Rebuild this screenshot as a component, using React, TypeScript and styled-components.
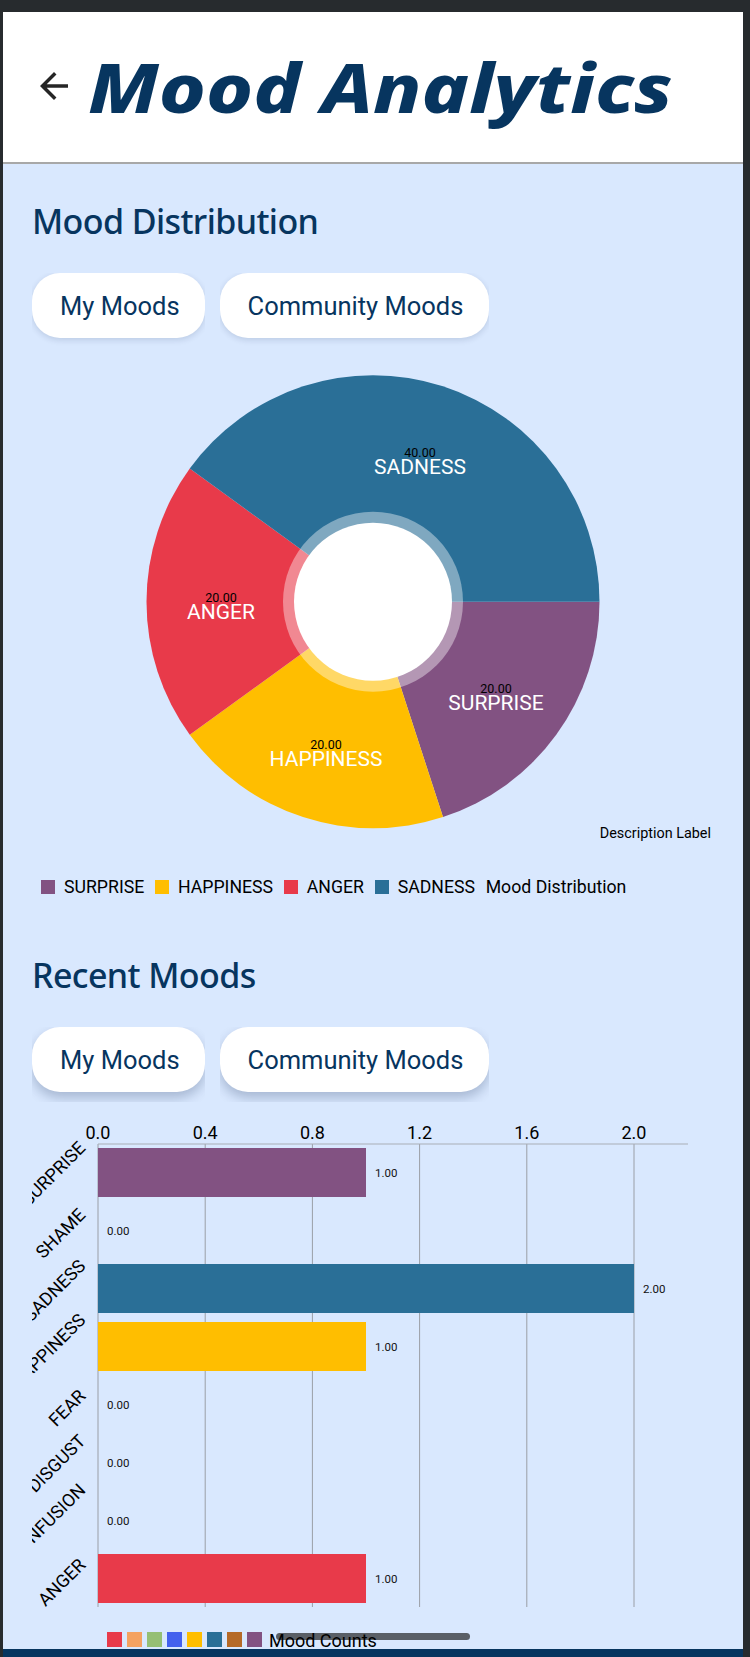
import styled, { createGlobalStyle } from 'styled-components'

const pieData = [
  { name: 'SURPRISE', value: 20, color: '#825282', x: 496, y: 688 },
  { name: 'HAPPINESS', value: 20, color: '#ffbe00', x: 326, y: 744 },
  { name: 'ANGER', value: 20, color: '#e83a4a', x: 221, y: 597 },
  { name: 'SADNESS', value: 40, color: '#2a6f97', x: 420, y: 452 },
]

// lift: how far above the row's middle the rotated label ends
const barData = [
  { name: 'SURPRISE', value: 1, color: '#825282', lift: 32 },
  { name: 'SHAME', value: 0, color: '#b56a28', lift: 23 },
  { name: 'SADNESS', value: 2, color: '#2a6f97', lift: 30 },
  { name: 'HAPPINESS', value: 1, color: '#ffbe00', lift: 34 },
  { name: 'FEAR', value: 0, color: '#4361ee', lift: 16 },
  { name: 'DISGUST', value: 0, color: '#95bf74', lift: 29 },
  { name: 'CONFUSION', value: 0, color: '#f4a261', lift: 38 },
  { name: 'ANGER', value: 1, color: '#e83a4a', lift: 21 },
]

const legendColors = ['#e83a4a', '#f4a261', '#95bf74', '#4361ee', '#ffbe00', '#2a6f97', '#b56a28', '#825282']
const ticks = [0, 0.4, 0.8, 1.2, 1.6, 2]

const CX = 373
const CY = 601.7
const R = 226.5

const point = (deg: number) => {
  const a = (deg * Math.PI) / 180
  return `${CX + R * Math.cos(a)} ${CY + R * Math.sin(a)}`
}

const slices = () => {
  let start = 0
  return pieData.map((d) => {
    const sweep = (d.value / 100) * 360
    const path = `M${CX} ${CY} L${point(start)} A${R} ${R} 0 ${sweep > 180 ? 1 : 0} 1 ${point(start + sweep)} Z`
    start += sweep
    return { ...d, path }
  })
}

const xFor = (v: number) => 98 + v * 268

const MoodButtons = ({ strong }: { strong?: boolean }) => (
  <ButtonRow>
    <ButtonClip>
      <Btn $strong={strong}>My Moods</Btn>
    </ButtonClip>
    <ButtonClip>
      <Btn $strong={strong}>Community Moods</Btn>
    </ButtonClip>
  </ButtonRow>
)

const App = () => {
  return (
    <Frame>
      <Global />
      <Header>
        <BackIcon viewBox="0 0 24 24">
          <path d="M20 11H7.83l5.59-5.59L12 4l-8 8 8 8 1.41-1.41L7.83 13H20v-2z" />
        </BackIcon>
        <Title>Mood Analytics</Title>
      </Header>

      <Content>
        <Heading>Mood Distribution</Heading>
        <MoodButtons />

        <PieSvg viewBox="3 360 740 470">
          {slices().map((s) => (
            <path key={s.name} d={s.path} fill={s.color} />
          ))}
          <circle cx={CX} cy={CY} r={90} fill="#fff" fillOpacity={0.4} />
          <circle cx={CX} cy={CY} r={79} fill="#fff" />
          {pieData.map((s) => (
            <g key={s.name}>
              <ValueText x={s.x} y={s.y}>{s.value}.00</ValueText>
              <SliceLabel x={s.x} y={s.y + 15}>{s.name}</SliceLabel>
            </g>
          ))}
        </PieSvg>

        <Description>Description Label</Description>

        <PieLegend>
          {pieData.map((s) => (
            <LegendItem key={s.name}>
              <Swatch $color={s.color} />
              {s.name}
            </LegendItem>
          ))}
          <LegendItem>Mood Distribution</LegendItem>
        </PieLegend>

        <Heading $second>Recent Moods</Heading>
        <MoodButtons strong />

        <BarSvg viewBox="3 1102 740 520">
          <defs>
            <clipPath id="labelClip">
              <rect x={32} y={1130} width={70} height={490} />
            </clipPath>
          </defs>
          {ticks.map((t) => (
            <g key={t}>
              <line x1={xFor(t)} x2={xFor(t)} y1={1144} y2={1607} stroke="#9a9ea6" />
              <AxisText x={xFor(t)} y={1132}>{t.toFixed(1)}</AxisText>
            </g>
          ))}
          <line x1={98} x2={688} y1={1144} y2={1144} stroke="#a9aeb6" />
          {barData.map((b, i) => {
            const top = 1148 + i * 58
            const mid = top + 24.5
            const endY = mid - b.lift + 4
            return (
              <g key={b.name}>
                {b.value > 0 && <rect x={98} y={top} width={b.value * 268} height={49} fill={b.color} />}
                <BarValue x={xFor(b.value) + 9} y={mid}>{b.value.toFixed(2)}</BarValue>
                <g clipPath="url(#labelClip)">
                  <BarLabel transform={`rotate(-45 82 ${endY})`} x={82} y={endY}>{b.name}</BarLabel>
                </g>
              </g>
            )
          })}
        </BarSvg>

        <BarLegend>
          {legendColors.map((c) => (
            <BarSwatch key={c} $color={c} />
          ))}
          <BarLegendText>Mood Counts</BarLegendText>
        </BarLegend>
      </Content>

      <Footer />
      <HomePill />
    </Frame>
  )
}

export default App

const Global = createGlobalStyle`
  html, body {
    margin: 0;
    padding: 0;
    background: #272b2e;
    overflow: hidden;
  }
`

const Frame = styled.div`
  position: relative;
  display: flex;
  flex-direction: column;
  box-sizing: border-box;
  width: 750px;
  height: 1657px;
  padding: 12px 7px 0 3px;
  font-family: Roboto, sans-serif;
`

const Header = styled.header`
  display: flex;
  align-items: center;
  gap: 13px;
  box-sizing: border-box;
  height: 152px;
  padding: 0 0 2px 30px;
  background: #fff;
  border-bottom: 2px solid #a8a8a8;
`

const BackIcon = styled.svg`
  width: 42px;
  height: 42px;
  fill: #262626;
`

const Title = styled.h1`
  margin: 0;
  font-family: "Noto Sans", sans-serif;
  font-size: 68px;
  font-weight: 800;
  font-style: italic;
  color: #07355f;
  white-space: nowrap;
  transform: scaleX(1.167);
  transform-origin: left center;
`

const Content = styled.main`
  flex: 1;
  display: flex;
  flex-direction: column;
  background: #d9e8fe;
  padding-top: 35px;
`

const Heading = styled.h2<{ $second?: boolean }>`
  margin: ${(p) => (p.$second ? '56px' : '0')} 0 0 29px;
  height: 44px;
  font-family: "Noto Sans", sans-serif;
  font-size: 34px;
  line-height: 44px;
  font-weight: 500;
  letter-spacing: -0.6px;
  color: #07355f;
`

const ButtonRow = styled.div`
  display: flex;
  gap: 14.5px;
  margin: 30px 0 0 29px;
`

const ButtonClip = styled.div`
  overflow: hidden;
  padding-bottom: 10px;
`

const Btn = styled.button<{ $strong?: boolean }>`
  display: block;
  height: 65px;
  padding: 0 25.5px 0 28px;
  border: none;
  border-radius: 28px;
  background: #fff;
  color: #07355f;
  font-family: Roboto, sans-serif;
  font-size: 25.5px;
  box-shadow: ${(p) => (p.$strong ? '0 6px 12px rgba(7, 30, 70, 0.24)' : '0 2px 6px rgba(7, 30, 70, 0.14)')};
`

const PieSvg = styled.svg`
  display: block;
  width: 740px;
  height: 470px;
  margin-top: 12px;
`

const ValueText = styled.text`
  font-family: Roboto, sans-serif;
  font-size: 12.5px;
  fill: #000;
  text-anchor: middle;
  dominant-baseline: central;
`

const SliceLabel = styled.text`
  font-family: Roboto, sans-serif;
  font-size: 21px;
  fill: #fff;
  text-anchor: middle;
  dominant-baseline: central;
`

const Description = styled.div`
  margin: -4px 32px 0 0;
  text-align: right;
  font-size: 14.4px;
  line-height: 16px;
  color: #000;
`

const PieLegend = styled.div`
  display: flex;
  gap: 10.7px;
  margin: 35px 0 0 38px;
  height: 20px;
`

const LegendItem = styled.div`
  display: flex;
  align-items: center;
  gap: 9px;
  font-size: 17.7px;
  line-height: 20px;
  color: #000;
`

const Swatch = styled.span<{ $color: string }>`
  width: 14px;
  height: 14px;
  background: ${(p) => p.$color};
`

const BarSvg = styled.svg`
  display: block;
  width: 740px;
  height: 520px;
`

const AxisText = styled.text`
  font-family: Roboto, sans-serif;
  font-size: 18px;
  fill: #000;
  text-anchor: middle;
  dominant-baseline: central;
`

const BarValue = styled.text`
  font-family: Roboto, sans-serif;
  font-size: 11.5px;
  fill: #111;
  dominant-baseline: central;
`

const BarLabel = styled.text`
  font-family: Roboto, sans-serif;
  font-size: 18px;
  fill: #000;
  text-anchor: end;
  dominant-baseline: central;
`

const BarLegend = styled.div`
  display: flex;
  align-items: center;
  gap: 5px;
  height: 15px;
  margin: 10px 0 2px 104px;
`

const BarSwatch = styled.span<{ $color: string }>`
  width: 15px;
  height: 15px;
  background: ${(p) => p.$color};
`

const BarLegendText = styled.span`
  position: relative;
  z-index: 1;
  margin: 2px 0 0 2px;
  font-size: 18px;
  line-height: 18px;
  color: #000;
`

const Footer = styled.footer`
  height: 8px;
  background: #07355f;
`

const HomePill = styled.div`
  position: absolute;
  left: 276px;
  top: 1633px;
  width: 194px;
  height: 7px;
  border-radius: 4px;
  background: #5a5f66;
`
